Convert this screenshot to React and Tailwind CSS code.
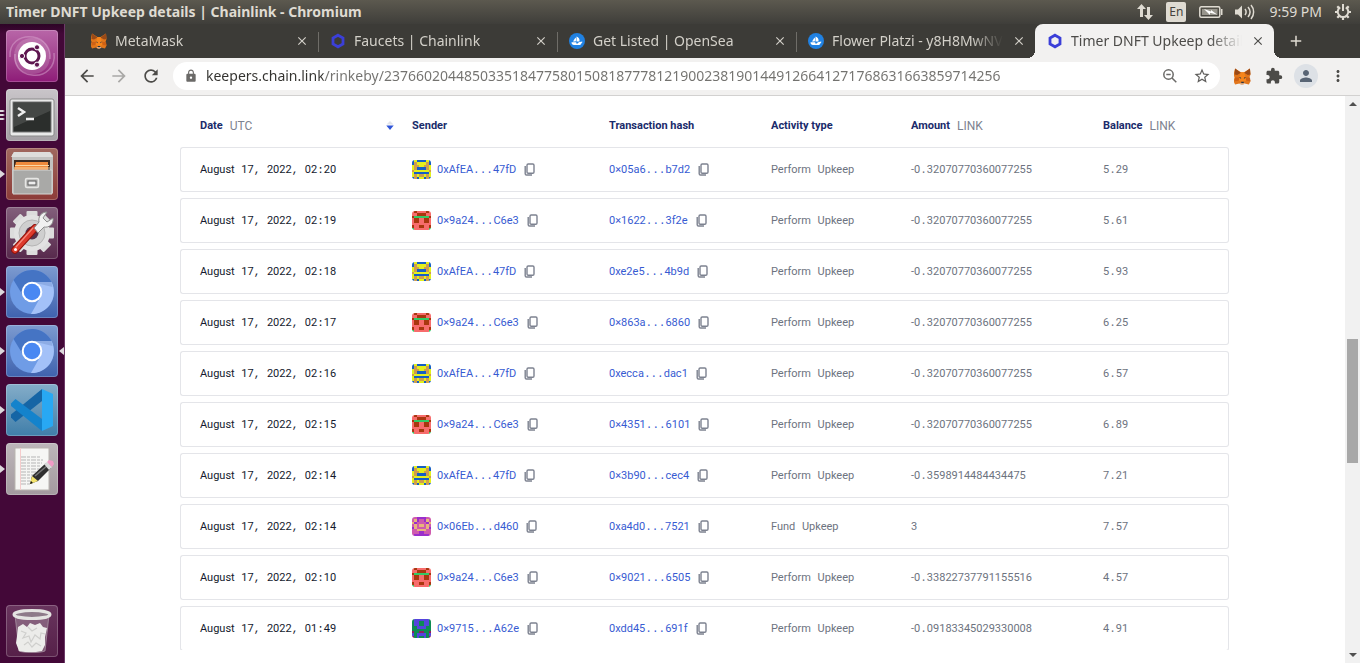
import React from "react";
import {
  MdArrowBack,
  MdArrowForward,
  MdRefresh,
  MdLock,
  MdStarBorder,
  MdExtension,
  MdPerson,
  MdMoreVert,
  MdClose,
  MdAdd,
} from "react-icons/md";

/* ---------- small drawings ---------- */

function Fox({ className }) {
  return (
    <svg viewBox="0 0 32 32" className={className} aria-hidden="true">
      <path fill="#e2761b" d="M2 1l11 7h6l11-7 1 11-2 6 2 7-3 6-8-2-3 2h-4l-3-2-8 2-3-6 2-7-2-6z" />
      <path fill="#9a4a17" d="M2 1l11 8-7 4-5-1zM30 1l-11 8 7 4 5-1z" />
      <path fill="#f6851b" d="M13 8h6l3 10 5 5-7 2-2 3h-4l-2-3-7-2 5-5z" />
      <path fill="#cd6116" d="M2 18l8 0-1 6-8 1zM30 18l-8 0 1 6 8 1z" />
      <path fill="#233447" d="M9 17l4 1 .5 2.500zM23 17l-4 1-.5 2.500zM13 26h6l-1 2h-4z" />
      <path fill="#d7c1b3" d="M11 29l2-1 1 1h4l1-1 2 1-3 2h-4z" />
    </svg>
  );
}

function Hexagon({ className }) {
  return (
    <svg viewBox="0 0 16 16" className={className} aria-hidden="true">
      <path fill="none" stroke="#3b3fd8" strokeWidth="2.800" d="M8 2.200l5 2.900v5.800l-5 2.900-5-2.900V5.100z" />
    </svg>
  );
}

function Sail({ className }) {
  return (
    <svg viewBox="0 0 32 32" className={className} aria-hidden="true">
      <circle cx="16" cy="16" r="16" fill="#2081e2" />
      <path fill="#fff" d="M8 17l5-8c1.500 3 1.500 6 0 8zM15 7c4 1 7 5 6 10h-6zM5 18.500h9.500v2.500h3l2-2.500 7-1.500v2c-2 1-2.500 5-5 5H10c-3 0-5-2-5-5.500z" />
    </svg>
  );
}

function ZoomOutIcon() {
  return (
    <svg viewBox="0 0 16 16" className="size-4" fill="none" stroke="#6b6a68" strokeWidth="1.500" aria-hidden="true">
      <circle cx="6.500" cy="6.500" r="4.700" />
      <path d="M4.300 6.500h4.400M10 10l4.300 4.300" />
    </svg>
  );
}

function CopyIcon() {
  return (
    <svg viewBox="0 0 11 13" className="h-[13px] w-[11px]" fill="none" stroke="#7d8290" aria-hidden="true">
      <rect x="3" y="1" width="7" height="9.300" rx="1.200" strokeWidth="1.400" />
      <path d="M1.200 3v7.700c0 .8.500 1.300 1.300 1.300H8" strokeWidth="1.400" />
    </svg>
  );
}

const palettes = {
  yellow: {
    colors: { a: "#e3f01c", b: "#155fc4", c: "#cf9d4e" },
    rows: ["babb", "bcaa", "acca", "acbb", "caaa", "abbb", "acac", "bcba"],
  },
  red: {
    colors: { a: "#f76c6c", b: "#a9370f", c: "#33c965" },
    rows: ["abaa", "aabb", "bccc", "abba", "abba", "aaaa", "baab", "caaa"],
  },
  purple: {
    colors: { a: "#cf5aae", b: "#9a2fcb", c: "#e8b57c" },
    rows: ["aabb", "acba", "cbaa", "acac", "bcaa", "aacc", "aaab", "abbb"],
  },
  green: {
    colors: { a: "#0d8b52", b: "#5444dc", c: "#8e1f60" },
    rows: ["abbb", "abba", "abba", "aabb", "aaaa", "caac", "babb", "caba"],
  },
};

function Blocky({ kind }) {
  const { colors, rows } = palettes[kind];
  return (
    <svg viewBox="0 0 8 8" shapeRendering="crispEdges" className="size-[19px] shrink-0 rounded-[3px]" aria-hidden="true">
      {rows.map((row, y) =>
        (row + [...row].reverse().join("")).split("").map((c, x) => (
          <rect key={`${x}-${y}`} x={x} y={y} width="1" height="1" fill={colors[c]} />
        ))
      )}
    </svg>
  );
}

/* ---------- launcher icons ---------- */

function UbuntuArt() {
  return (
    <>
      <path d="M4 27C3 13 14 5 27 7c12 2 18 12 17 22M48 23c2 14-9 24-22 22C13 44 8 34 9 24" fill="none" stroke="#d9a5cf" strokeOpacity=".5" strokeWidth="1.500" />
      <path d="M8 26C8 14 17 8 26 8c11 0 18 8 18 18 0 12-8 18-18 18S8 37 8 26z" fill="#fff" fillOpacity=".16" />
      <circle cx="26" cy="26" r="14" fill="#fff" />
      <circle cx="26" cy="26" r="7" fill="none" stroke="#5e1650" strokeWidth="3" />
      <g fill="#5e1650" stroke="#fff" strokeWidth="1">
        <circle cx="16" cy="26" r="2.600" />
        <circle cx="31" cy="17.300" r="2.600" />
        <circle cx="31" cy="34.700" r="2.600" />
      </g>
    </>
  );
}

function TerminalArt() {
  return (
    <>
      <rect x="4" y="10" width="44" height="37" rx="2" fill="#e9e9e9" stroke="#8a8a8a" />
      <rect x="7" y="13" width="38" height="30" fill="#2b2e2c" stroke="#777" />
      <path d="M8 14h36v8L8 38z" fill="#fff" fillOpacity=".12" />
      <path d="M12 19l6 4-6 4" fill="none" stroke="#eee" strokeWidth="2.500" />
      <path d="M20 30h8" stroke="#eee" strokeWidth="2.500" />
    </>
  );
}

function FilesArt() {
  return (
    <>
      <path d="M6 7l2-3h36l3 3v38H6z" fill="#c2c2c0" />
      <path d="M8 4h36l3 5H5z" fill="#dededc" />
      <rect x="8" y="12" width="36" height="10" fill="#3b2a22" />
      <path d="M10 14h32v8H8z" fill="#ef8a3c" />
      <path d="M9 17.500h34M8 20h36" stroke="#fbd7a4" strokeWidth="1" />
      <path d="M7 22h39v24H7z" fill="#a9a9a7" stroke="#d5d5d3" />
      <rect x="19.500" y="30.500" width="13" height="9" rx="1.500" fill="#b9b9b7" stroke="#e6e6e4" strokeWidth="1.500" />
      <rect x="22" y="33" width="8" height="4" fill="#eee" stroke="#5a5a5a" />
    </>
  );
}

function SettingsArt() {
  const teeth = [0, 45, 90, 135, 180, 225, 270, 315];
  return (
    <>
      {teeth.map((t) => (
        <rect key={t} x="20.500" y="4" width="11" height="12" rx="1" fill="#dcdcdc" transform={`rotate(${t} 26 26)`} />
      ))}
      <circle cx="26" cy="26" r="18" fill="#e2e2e2" />
      <circle cx="26" cy="26" r="13" fill="#cfcfcf" stroke="#b5b5b5" />
      <circle cx="26" cy="26" r="6.500" fill="#55324b" />
      <path d="M9 43l20-22" stroke="#8f130b" strokeWidth="7.500" strokeLinecap="round" />
      <path d="M9 43l20-22" stroke="#dd3a2c" strokeWidth="5.500" strokeLinecap="round" />
      <path d="M10 40l17-19" stroke="#f58a7c" strokeWidth="1.200" strokeLinecap="round" />
      <path d="M28 21l5-6c-1-5 2-10 8-10l-4 6 4 4 6-4c1 6-4 10-9 9l-6 6z" fill="#f1f1f1" stroke="#8d8d8d" />
      <circle cx="9.500" cy="42.500" r="1.500" fill="#fff" />
    </>
  );
}

function ChromiumArt() {
  return (
    <>
      <circle cx="26" cy="26" r="22" fill="#6f9ce6" />
      <path d="M26 16h19.500A22 22 0 0 1 25 48l9-16z" fill="#a3c1f8" />
      <path d="M7.500 14A22 22 0 0 1 45.500 16H26c-6 0-10 5-10 12z" fill="#4574c4" />
      <path d="M26 16h19.500l1 5z" fill="#7f9fd8" fillOpacity=".6" />
      <circle cx="26" cy="26" r="10.300" fill="#fff" />
      <circle cx="26" cy="26" r="8.300" fill="#4a88f2" />
    </>
  );
}

function CodeArt() {
  return (
    <>
      <path d="M36 5v12L9.500 38 5 33.500v-3z" fill="#1565a5" />
      <path d="M5 19.500L9.500 15 36 35v12L5 22z" fill="#1483cc" />
      <path d="M36 5l11 5v32l-11 5z" fill="#28a8f3" />
    </>
  );
}

function EditorArt() {
  return (
    <>
      <rect x="9" y="5" width="34" height="42" fill="#f6f6f4" stroke="#b9b5b0" />
      <path d="M14.500 5v42" stroke="#f5cccc" />
      <path d="M15 14h20M15 17h22M15 20h21M15 23h19M15 26h21M15 29h17M15 32h18M15 35h12M15 38h10M15 41h9" stroke="#b5b5b5" strokeWidth="1" strokeDasharray="5 1 3 1" />
      <path d="M24 41l2-8 14-13 5 5-13 13z" fill="#2f2f2f" />
      <path d="M29 33l13-11" stroke="#777" strokeWidth="1.500" />
      <path d="M24 41l2-8 6 5z" fill="#f3e36b" />
      <path d="M24 41l1-3 2 2z" fill="#111" />
      <path d="M38 21l3-2 5 5-3 3z" fill="#d9d9d9" />
      <path d="M41 19l2-2 4 1 1 3-2 3z" fill="#f19bc6" />
    </>
  );
}

function TrashArt() {
  return (
    <>
      <path d="M9 10l4 36c4 2 22 2 26 0l4-36z" fill="#b9a9b5" fillOpacity=".4" stroke="#bbadb8" strokeOpacity=".6" />
      <path d="M12 22l5-3 4 3 3-4 5 2 5-2 3 4 4 1-2 9 0 8-3 6-6 1-5 0-6 0-6-1-3-8 1-7z" fill="#ececea" />
      <path d="M15 26l5 2-3 5 6-2 2 6 4-7 5 4 1-6 4 1M18 40l4-3 4 5 4-4 5 3M22 22l4 4 5-3" fill="none" stroke="#cfcfcd" strokeWidth="1.200" />
      <ellipse cx="26" cy="9.500" rx="18" ry="4" fill="#8d7a89" stroke="#e4e4e2" strokeWidth="3" />
    </>
  );
}

const launcher = [
  { name: "Dash", Art: UbuntuArt, tile: "bg-linear-to-b from-[#b866a8] to-[#8e1a78]", marks: 0 },
  { name: "Terminal", Art: TerminalArt, tile: "bg-linear-to-b from-[#c9c5c9] to-[#a49fa4]", marks: 3 },
  { name: "Files", Art: FilesArt, tile: "bg-linear-to-b from-[#a0685f] to-[#8c3b38]", marks: 1 },
  { name: "System Settings", Art: SettingsArt, tile: "bg-linear-to-b from-[#83607c] to-[#57294c]", marks: 0 },
  { name: "Chromium", Art: ChromiumArt, tile: "bg-linear-to-b from-[#7d9bd0] to-[#3f62ae]", marks: 1 },
  { name: "Chromium window", Art: ChromiumArt, tile: "bg-linear-to-b from-[#7d9bd0] to-[#3f62ae]", marks: 1, active: true },
  { name: "Visual Studio Code", Art: CodeArt, tile: "bg-linear-to-b from-[#84adc9] to-[#3f7ea9]", marks: 1 },
  { name: "Text Editor", Art: EditorArt, tile: "bg-linear-to-b from-[#bdb6ba] to-[#a39a9f]", marks: 1 },
];

function LauncherButton({ name, Art, tile, marks, active }) {
  return (
    <div className="relative flex pl-[6px]">
      {marks === 1 && (
        <svg viewBox="0 0 5 8" className="absolute top-[22px] left-0 h-2 w-[5px]" aria-hidden="true">
          <path d="M0 0l5 4-5 4z" fill="#dcd8dc" />
        </svg>
      )}
      {marks === 3 && (
        <svg viewBox="0 0 5 12" className="absolute top-[20px] left-0 h-3 w-[5px]" aria-hidden="true">
          <path d="M0 1h3l2 1-2 1H0zM0 5h3l2 1-2 1H0zM0 9h3l2 1-2 1H0z" fill="#dcd8dc" />
        </svg>
      )}
      <button type="button" aria-label={name} className={`size-[52px] overflow-hidden rounded-[4px] shadow-[inset_0_0_0_1px_rgba(255,255,255,0.22)] ${tile}`}>
        <svg viewBox="0 0 52 52" className="size-full" aria-hidden="true">
          <Art />
        </svg>
      </button>
      {active && (
        <svg viewBox="0 0 5 8" className="absolute top-[22px] right-0 h-2 w-[5px]" aria-hidden="true">
          <path d="M5 0L0 4l5 4z" fill="#dcd8dc" />
        </svg>
      )}
    </div>
  );
}

function Launcher() {
  return (
    <nav aria-label="Launcher" className="flex w-[65px] shrink-0 flex-col justify-between border-r border-[#6d3a68] bg-linear-to-b from-[#2d0526] to-[#430838] to-[10px] pt-[6px] pb-[6px]">
      <div className="flex flex-col gap-[7px]">
        {launcher.map((item) => (
          <LauncherButton key={item.name} {...item} />
        ))}
      </div>
      <LauncherButton name="Trash" Art={TrashArt} tile="bg-linear-to-b from-[#69355e] to-[#562049]" marks={0} />
    </nav>
  );
}

/* ---------- system bar ---------- */

function SystemBar() {
  return (
    <header className="flex h-6 shrink-0 items-center justify-between bg-linear-to-b from-[#5c594f] to-[#3f3e3a] pr-2 pl-[6px] text-[#dfdbd2]">
      <h1 className="truncate text-[14px] leading-6 font-bold">Timer DNFT Upkeep details | Chainlink - Chromium</h1>
      <div className="flex shrink-0 items-center">
        <svg viewBox="0 0 18 18" className="mr-3 size-[18px]" fill="#dfdbd2" aria-hidden="true">
          <path d="M5.500 1l4.500 5H7v8H4V6H1zM12.500 17L8 12h3V4h3v8h3z" />
        </svg>
        <span className="mr-3 flex h-5 w-5 items-center justify-center rounded-[2px] bg-[#dfdbd2] text-[12px] leading-5 text-[#45433e]">En</span>
        <svg viewBox="0 0 26 16" className="mr-[10px] h-4 w-[26px]" aria-hidden="true">
          <rect x="1.800" y="2.800" width="20" height="10.500" rx="1.500" fill="none" stroke="#dfdbd2" strokeWidth="1.500" />
          <rect x="4" y="5" width="15.500" height="6" fill="#98958c" />
          <path d="M23 5h1.500v6H23z" fill="#dfdbd2" />
          <path d="M6 5l7 2.500V6l6 4.500-7-1.800V11z" fill="#fff" />
        </svg>
        <svg viewBox="0 0 22 16" className="mr-[13px] h-4 w-[22px]" aria-hidden="true">
          <path d="M1 5.500h3l4-4v13l-4-4H1z" fill="#dfdbd2" />
          <path d="M11 5c1.500 2 1.500 4 0 6M14 3c2.500 3 2.500 7 0 10M17 1c3.500 4 3.500 10 0 14" fill="none" stroke="#dfdbd2" strokeWidth="1.500" />
        </svg>
        <time className="mr-3 text-[14px] leading-6 whitespace-nowrap">9:59 PM</time>
        <svg viewBox="0 0 18 18" className="size-[18px]" fill="none" stroke="#dfdbd2" aria-hidden="true">
          <path d="M6.200 4.300a5.300 5.300 0 1 0 5.600 0" strokeWidth="2" />
          <path d="M9 1v7" strokeWidth="2" />
          <path d="M1 9h2.500M14.500 9H17M9 14.500V17M3.300 3.300l1.800 1.800M14.700 3.300l-1.800 1.800M3.300 14.700l1.800-1.800M14.700 14.700l-1.800-1.800" strokeWidth="2.200" />
        </svg>
      </div>
    </header>
  );
}

/* ---------- browser chrome ---------- */

const tabs = [
  { title: "MetaMask", Icon: Fox },
  { title: "Faucets | Chainlink", Icon: Hexagon, divider: true },
  { title: "Get Listed | OpenSea", Icon: Sail, divider: true },
  { title: "Flower Platzi - y8H8MwNV", Icon: Sail, divider: true },
  { title: "Timer DNFT Upkeep detail", Icon: Hexagon, active: true },
];

const flare = "absolute bottom-0 size-2";

function Tab({ title, Icon, divider, active }) {
  return (
    <div
      role="tab"
      aria-selected={Boolean(active)}
      className={`relative flex min-w-0 flex-1 items-center gap-2 pr-2 pl-3 ${active ? "rounded-t-lg bg-[#f2f1f0] text-[#4c4b48]" : "text-[#d3d0c9]"}`}
    >
      {divider && <span className="absolute top-2 left-0 h-5 w-px bg-[#6f6d68]" />}
      {active && (
        <>
          <span className={`${flare} -left-2 bg-[radial-gradient(circle_at_0_0,transparent_8px,#f2f1f0_8px)]`} />
          <span className={`${flare} -right-2 bg-[radial-gradient(circle_at_100%_0,transparent_8px,#f2f1f0_8px)]`} />
        </>
      )}
      <Icon className="size-4 shrink-0" />
      <span className="min-w-0 flex-1 overflow-hidden text-[14px] leading-5 whitespace-nowrap [mask-image:linear-gradient(90deg,black_calc(100%-32px),transparent)]">
        {title}
      </span>
      <button type="button" aria-label={`Close ${title}`} className="flex size-4 shrink-0 items-center justify-center">
        <MdClose className="size-[14px]" />
      </button>
    </div>
  );
}

function TabStrip() {
  return (
    <div className="flex h-[34px] shrink-0 bg-[#3c3b37] pl-[14px]">
      <div role="tablist" className="flex min-w-0 flex-[0_1_1195px]">
        {tabs.map((tab) => (
          <Tab key={tab.title} {...tab} />
        ))}
      </div>
      <button type="button" aria-label="New tab" className="ml-3 flex w-5 shrink-0 items-center justify-center text-[#dfdbd2]">
        <MdAdd className="size-[18px]" />
      </button>
    </div>
  );
}

function Toolbar() {
  return (
    <div className="flex h-[38px] shrink-0 items-center border-b border-[#d2d1d0] bg-[#f2f1f0] pr-3 pb-px pl-3 text-[#4c4b48]">
      <button type="button" aria-label="Back" className="mr-3 flex size-5 items-center justify-center">
        <MdArrowBack className="size-5" />
      </button>
      <button type="button" aria-label="Forward" className="mr-3 flex size-5 items-center justify-center text-[#a9a8a6]">
        <MdArrowForward className="size-5" />
      </button>
      <button type="button" aria-label="Reload" className="mr-3 flex size-5 items-center justify-center">
        <MdRefresh className="size-5" />
      </button>
      <div className="flex h-7 min-w-0 flex-1 items-center rounded-full bg-white pr-2 pl-[11px]">
        <MdLock className="mr-2 size-[14px] shrink-0 text-[#6b6a68]" />
        <input
          type="text"
          aria-label="Address"
          defaultValue="keepers.chain.link/rinkeby/23766020448503351847758015081877781219002381901449126641271768631663859714256"
          className="min-w-0 flex-1 bg-transparent bg-linear-to-r from-[#33322f] from-[117px] to-[#73726f] to-[117px] bg-clip-text text-[14px] leading-7 text-transparent outline-none"
        />
        <button type="button" aria-label="Zoom" className="flex size-6 items-center justify-center">
          <ZoomOutIcon />
        </button>
        <button type="button" aria-label="Bookmark" className="ml-[10px] flex size-5 items-center justify-center">
          <MdStarBorder className="size-[18px] text-[#5f5e5c]" />
        </button>
      </div>
      <button type="button" aria-label="MetaMask" className="ml-3 flex size-5 items-center justify-center">
        <Fox className="size-[17px]" />
      </button>
      <button type="button" aria-label="Extensions" className="ml-3 flex size-5 items-center justify-center">
        <MdExtension className="size-[18px]" />
      </button>
      <button type="button" aria-label="Profile" className="ml-[10px] flex size-6 items-center justify-center rounded-full bg-[#dde1e6] text-[#596575]">
        <MdPerson className="size-[18px]" />
      </button>
      <button type="button" aria-label="Menu" className="ml-[10px] flex size-5 items-center justify-center">
        <MdMoreVert className="size-[18px]" />
      </button>
    </div>
  );
}

/* ---------- activity table ---------- */

const A = { sender: "0xAfEA...47fD", icon: "yellow" };
const B = { sender: "0×9a24...C6e3", icon: "red" };
const C = { sender: "0×06Eb...d460", icon: "purple" };
const D = { sender: "0×9715...A62e", icon: "green" };

const rows = [
  { date: "August 17, 2022, 02:20", ...A, hash: "0×05a6...b7d2", type: "Perform Upkeep", amount: "-0.32070770360077255", balance: "5.29" },
  { date: "August 17, 2022, 02:19", ...B, hash: "0×1622...3f2e", type: "Perform Upkeep", amount: "-0.32070770360077255", balance: "5.61" },
  { date: "August 17, 2022, 02:18", ...A, hash: "0xe2e5...4b9d", type: "Perform Upkeep", amount: "-0.32070770360077255", balance: "5.93" },
  { date: "August 17, 2022, 02:17", ...B, hash: "0×863a...6860", type: "Perform Upkeep", amount: "-0.32070770360077255", balance: "6.25" },
  { date: "August 17, 2022, 02:16", ...A, hash: "0xecca...dac1", type: "Perform Upkeep", amount: "-0.32070770360077255", balance: "6.57" },
  { date: "August 17, 2022, 02:15", ...B, hash: "0×4351...6101", type: "Perform Upkeep", amount: "-0.32070770360077255", balance: "6.89" },
  { date: "August 17, 2022, 02:14", ...A, hash: "0×3b90...cec4", type: "Perform Upkeep", amount: "-0.3598914484434475", balance: "7.21" },
  { date: "August 17, 2022, 02:14", ...C, hash: "0xa4d0...7521", type: "Fund Upkeep", amount: "3", balance: "7.57" },
  { date: "August 17, 2022, 02:10", ...B, hash: "0×9021...6505", type: "Perform Upkeep", amount: "-0.33822737791155516", balance: "4.57" },
  { date: "August 17, 2022, 01:49", ...D, hash: "0xdd45...691f", type: "Perform Upkeep", amount: "-0.09183345029330008", balance: "4.91" },
];

/* Letters and digits are proportional; spaces and punctuation come from the monospace face. */
function Mixed({ children }) {
  return children.split(/([ .,:]+)/).map((part, i) =>
    i % 2 ? (
      <span key={i} className="font-['Liberation_Mono',monospace]">{part}</span>
    ) : (
      part
    )
  );
}

function Head({ label, unit }) {
  return (
    <span className="flex h-4 items-center gap-[7px]">
      {label}
      {unit && <span className="text-[12px] font-normal text-[#7d8290]">{unit}</span>}
    </span>
  );
}

function Hash({ value }) {
  return (
    <>
      <a href="#" className="text-[#375bd2]"><Mixed>{value}</Mixed></a>
      <button type="button" aria-label={`Copy ${value}`} className="ml-2 flex">
        <CopyIcon />
      </button>
    </>
  );
}

const cell = "h-[45px] border-y border-[#e4e5e9] p-0 align-middle";

function ActivityTable() {
  return (
    <table className="w-full table-fixed border-separate border-spacing-x-0 border-spacing-y-[6px] text-[11px] leading-4 font-['Roboto',sans-serif] text-[#6d7380]">
      <colgroup>
        <col className="w-[232px]" />
        <col className="w-[197px]" />
        <col className="w-[162px]" />
        <col className="w-[140px]" />
        <col className="w-[192px]" />
        <col className="w-[126px]" />
      </colgroup>
      <thead>
        <tr className="text-left text-[#1a2b6b]">
          <th scope="col" className="h-[39px] p-0 pt-2 pl-5">
            <span className="flex items-center justify-between pr-[18px]">
              <Head label="Date" unit="UTC" />
              <button type="button" aria-label="Sort by date" className="flex">
                <svg viewBox="0 0 8 10" className="h-[10px] w-2" aria-hidden="true">
                  <path d="M4 0l3.500 3.500h-7z" fill="#e1e4ea" />
                  <path d="M.3 4.500h7.400L4 9z" fill="#2f55d8" />
                </svg>
              </button>
            </span>
          </th>
          <th scope="col" className="p-0 pt-2"><Head label="Sender" /></th>
          <th scope="col" className="p-0 pt-2"><Head label="Transaction hash" /></th>
          <th scope="col" className="p-0 pt-2"><Head label="Activity type" /></th>
          <th scope="col" className="p-0 pt-2"><Head label="Amount" unit="LINK" /></th>
          <th scope="col" className="p-0 pt-2"><Head label="Balance" unit="LINK" /></th>
        </tr>
      </thead>
      <tbody>
        {rows.map((r) => (
          <tr key={r.hash}>
            <td className={`${cell} rounded-l-[3px] border-l text-[#141a2e]`}>
              <span className="pl-[19px]"><Mixed>{r.date}</Mixed></span>
            </td>
            <td className={cell}>
              <span className="flex items-center">
                <Blocky kind={r.icon} />
                <span className="ml-[6px] flex items-center"><Hash value={r.sender} /></span>
              </span>
            </td>
            <td className={cell}>
              <span className="flex items-center"><Hash value={r.hash} /></span>
            </td>
            <td className={cell}><Mixed>{r.type}</Mixed></td>
            <td className={cell}><Mixed>{r.amount}</Mixed></td>
            <td className={`${cell} rounded-r-[3px] border-r`}><Mixed>{r.balance}</Mixed></td>
          </tr>
        ))}
      </tbody>
    </table>
  );
}

function ScrollTrack() {
  return (
    <div className="flex w-[15px] shrink-0 flex-col items-center justify-between bg-[#f1f1f1] py-[5px]" aria-hidden="true">
      <svg viewBox="0 0 8 5" className="h-[5px] w-2"><path d="M0 5l4-4 4 4z" fill="#505050" /></svg>
      <div className="flex w-full flex-1 flex-col items-center">
        <div className="flex-[233_1_0%]" />
        <div className="w-[11px] flex-[124_1_0%] bg-[#a8a8a8]" />
        <div className="flex-[190_1_0%]" />
      </div>
      <svg viewBox="0 0 8 5" className="h-[5px] w-2"><path d="M0 0l4 4 4-4z" fill="#505050" /></svg>
    </div>
  );
}

export default function App() {
  return (
    <div className="flex h-screen flex-col overflow-hidden bg-white font-['Noto_Sans',sans-serif]">
      <SystemBar />
      <div className="flex min-h-0 flex-1">
        <Launcher />
        <div className="flex min-w-0 flex-1 flex-col">
          <TabStrip />
          <Toolbar />
          <div className="flex min-h-0 flex-1">
            <main className="flex min-w-0 flex-1 flex-col pr-[116px] pb-[13px] pl-[115px]">
              <div className="min-h-0 flex-1 overflow-hidden">
                <ActivityTable />
              </div>
            </main>
            <ScrollTrack />
          </div>
        </div>
      </div>
    </div>
  );
}
